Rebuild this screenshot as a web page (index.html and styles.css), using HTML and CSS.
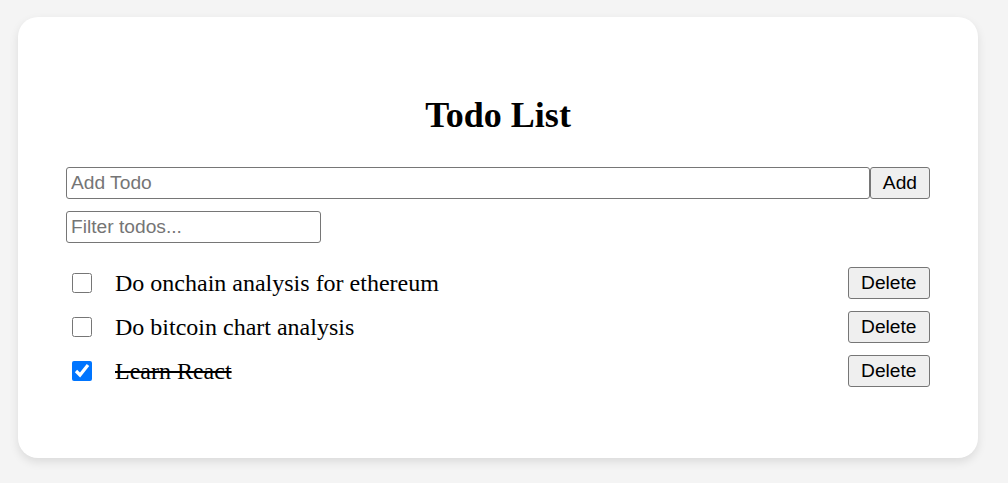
FILE: index.html
```html
<!DOCTYPE html>
<html lang="en">
<head>
<meta charset="utf-8">
<title>Todo List</title>
<link rel="stylesheet" href="styles.css">
</head>
<body>
<div class="page">
  <div class="card">
    <h1 class="title">Todo List</h1>
    <div class="add-row">
      <input class="field add-input" type="text" placeholder="Add Todo">
      <button class="btn" type="button">Add</button>
    </div>
    <input class="field filter-input" type="text" placeholder="Filter todos...">
    <ul class="todos">
      <li class="todo">
        <input class="check" type="checkbox">
        <span class="todo-text">Do onchain analysis for ethereum</span>
        <button class="btn delete" type="button">Delete</button>
      </li>
      <li class="todo">
        <input class="check" type="checkbox">
        <span class="todo-text">Do bitcoin chart analysis</span>
        <button class="btn delete" type="button">Delete</button>
      </li>
      <li class="todo">
        <input class="check" type="checkbox" checked>
        <span class="todo-text done">Learn React</span>
        <button class="btn delete" type="button">Delete</button>
      </li>
    </ul>
  </div>
</div>
</body>
</html>
```
FILE: styles.css
```css
html, body {
  margin: 0;
  padding: 0;
}
body {
  background: #f4f4f4;
  font-family: "Liberation Serif", "Times New Roman", serif;
  color: #000;
}
.page {
  padding: 17px 30px 24px 18px;
}
.card {
  background: #fff;
  border-radius: 20px;
  box-shadow: 0 4px 10px rgba(0, 0, 0, 0.1);
  padding: 48px;
  display: flex;
  flex-direction: column;
}
.title {
  font-size: 36px;
  line-height: 36px;
  font-weight: bold;
  text-align: center;
  margin: 32px 0 34px;
}
.add-row {
  display: flex;
}
.field {
  font-family: "Liberation Sans", Arial, sans-serif;
  font-size: 19.2px;
  padding: 4px;
  border: 1px solid #767676;
  border-radius: 3px;
  background: #fff;
  color: #000;
  box-sizing: border-box;
  height: 32px;
  margin: 0;
}
.field::placeholder {
  color: #757575;
}
.add-input {
  flex: 1;
  min-width: 0;
}
.filter-input {
  width: 255px;
  margin-top: 12px;
}
.btn {
  font-family: "Liberation Sans", Arial, sans-serif;
  font-size: 19.2px;
  padding: 0 12px;
  height: 32px;
  border: 1px solid #767676;
  border-radius: 3px;
  background: #efefef;
  color: #000;
  margin: 0;
}
.todos {
  list-style: none;
  margin: 24px 0 23px;
  padding: 0;
  display: flex;
  flex-direction: column;
  gap: 12px;
}
.todo {
  display: flex;
  align-items: center;
  height: 32px;
}
.check {
  width: 20px;
  height: 20px;
  margin: 0 23px 0 6px;
  accent-color: #0075ff;
}
.todo-text {
  font-size: 24px;
}
.done {
  text-decoration: line-through;
}
.delete {
  margin-left: auto;
  padding: 0 12.5px;
}
```
